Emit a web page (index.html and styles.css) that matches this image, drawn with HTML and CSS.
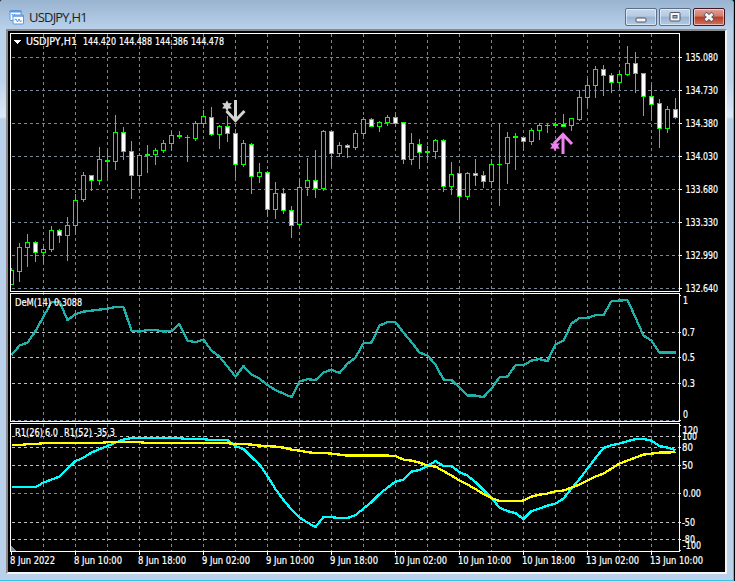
FILE: index.html
```html
<!DOCTYPE html>
<html lang="en">
<head>
    <meta charset="UTF-8">
    <title>USDJPY,H1</title>
    <link rel="stylesheet" href="styles.css">
</head>
<body>
    <div class="window">
        <!-- title bar -->
        <div class="titlebar">
            <svg class="app-icon" width="16" height="16" viewBox="0 0 16 16">
                <rect x="1" y="1.500" width="11" height="10" rx="1" fill="#fff" stroke="#5b95dc"/>
                <path d="M0.500 2.500h12" stroke="#5b95dc" stroke-width="2"/>
                <path d="M2.500 6l1-1 1 2 1.500-2" fill="none" stroke="#5b95dc"/>
                <rect x="4" y="6" width="10.500" height="9" rx="1" fill="#fff" stroke="#5b95dc"/>
                <path d="M3.500 7h11.500" stroke="#5b95dc" stroke-width="1.500"/>
                <path d="M5.500 11l1.500-1 1.500 3 1.500-3 1.500 3 1-1.500" fill="none" stroke="#5b95dc"/>
            </svg>
            <span class="title">USDJPY,H1</span>
            <div class="buttons">
                <div class="btn">
                    <svg width="12" height="12" viewBox="0 0 12 12"><rect x="1" y="7" width="10" height="4" rx="1" fill="#f5f5f5" stroke="#535666"/></svg>
                </div>
                <div class="btn">
                    <svg width="12" height="12" viewBox="0 0 12 12"><rect x="1" y="1.500" width="10" height="8.500" rx="1" fill="#f5f5f5" stroke="#535666"/><rect x="4" y="4.500" width="4" height="2.500" fill="#8fb0d4" stroke="#535666"/></svg>
                </div>
                <div class="btn close">
                    <svg width="12" height="12" viewBox="0 0 12 12"><path d="M2 2.500l8 7M10 2.500l-8 7" stroke="#535666" stroke-width="4.600"/><path d="M2.500 2.900l7 6.200M9.500 2.900l-7 6.200" stroke="#f5f5f5" stroke-width="2.800"/></svg>
                </div>
            </div>
        </div>

        <!-- chart -->
        <div class="client">
            <svg id="chart" class="chart" width="717" height="541" viewBox="8 31 717 541"></svg>
        </div>
    </div>

    <script>
        const chart = document.getElementById('chart');
        const STEP = 8;
        const FIRST = 11;

        // [high, body top, body bottom, low, 1 = bearish]
        const candles = [
            [268,270,284,284,0],[243,247,271,281,0],[234,242,247,266,0],[241,242,252,261,1],
            [246,249,252,263,0],[226,230,249,251,0],[229,230,235,242,1],[217,225,235,260,0],
            [194,200,225,233,0],[172,175,199,201,0],[175,175,180,190,1],[147,159,180,184,0],
            [149,160,161,177,0],[115,132,161,169,0],[127,132,151,159,1],[141,151,175,198,1],
            [153,155,175,185,0],[145,154,155,172,0],[148,150,154,164,0],[140,143,150,152,0],
            [131,135,143,150,0],[131,135,136,138,0],[135,137,137,161,0],[121,123,138,140,0],
            [110,116,123,127,0],[107,117,134,135,1],[125,126,134,148,0],[116,126,133,141,1],
            [129,133,164,177,1],[140,143,164,166,0],[143,144,176,193,1],[163,172,176,182,0],
            [171,172,209,216,1],[182,193,209,218,0],[188,193,210,213,1],[206,210,225,237,1],
            [179,187,224,227,0],[158,180,187,195,0],[150,180,188,197,1],[130,131,188,190,0],
            [130,131,153,165,1],[142,145,153,156,0],[144,145,147,157,1],[130,133,147,149,0],
            [117,119,133,135,0],[118,119,126,126,1],[121,122,126,131,0],[115,117,122,125,0],
            [115,117,123,123,1],[122,122,159,163,1],[133,143,159,164,0],[139,144,152,168,1],
            [146,151,152,159,0],[139,140,151,158,0],[139,140,186,191,1],[162,174,186,194,0],
            [167,173,196,221,1],[172,173,196,199,0],[159,173,175,185,1],[171,175,181,187,1],
            [159,164,181,187,0],[123,164,164,205,0],[132,137,163,183,0],[133,136,137,169,0],
            [136,137,141,150,1],[128,130,141,144,0],[123,125,130,139,0],[123,125,125,132,0],
            [122,124,125,127,0],[114,124,126,126,1],[118,118,125,130,0],[90,97,119,120,0],
            [79,85,97,106,0],[66,69,85,97,0],[65,69,75,95,1],[73,75,82,92,1],
            [71,74,82,87,0],[46,63,74,75,0],[52,63,73,92,1],[73,73,96,115,1],
            [85,96,104,120,1],[99,103,128,147,1],[106,109,128,132,0],[98,109,117,118,1]
        ];

        const dem = [
            355,345.5,342.5,331,316.5,302,301.5,320,314,311.5,310.5,309.5,308.5,307,307,330.5,
            331.5,330,330,331.5,331,324,340.5,342,339.5,350.5,356.5,366.5,376.5,366,374.5,378.5,
            385,390,393.5,397,381.5,379,380,372.5,369.5,373,363.5,357.5,343,342.5,325.5,322,322,
            332.5,342,352.5,355.5,364.5,379.5,380,387.5,395.5,395.5,397,388.5,377,376.5,365,365,
            360.5,359,361,344.5,340.5,323.5,318,318,315,315,301,300.5,300,317.5,335.5,340.5,
            352.5,352.5,352.5
        ];

        const r26 = [
            487,487,487,487,482.5,479.5,476.5,468.5,461,457.5,452.5,449,446,442.5,439.5,438,438,
            438,438,438,438,438,439,439,439,440,440,440,446,449,457,464.5,476,489,500,509.5,
            517.5,522.5,527,517,517,518,518,515,508.5,502,494,487.5,481.5,479.5,471.5,470,466,
            461,466,466,472,475.5,482,490,498,507.5,511,513,519,511,508.5,505.5,503.5,498.5,
            488.5,479,468.5,458,448,445,443.5,441,439,439,440.5,446,447.5,450
        ];

        const r52 = [
            445,445,444,444,443,443,443,443,443,443,443,443,442,442,442,442,442,443,443,443,443,
            443,443,443,443,443,443,443,444,444,444.5,445.5,446,446.5,447.5,449.5,450.5,452,453,
            453,453.5,454.5,455.5,455.5,455.5,455.5,455.5,455.5,456,459.5,460.5,462.5,465.5,466.5,
            471,475.5,480.5,484.5,489,494,498,501,501,501,500.5,496.5,494.5,493.5,491,490.5,487.5,
            484.5,480.5,476.5,473.5,468.5,463.5,460.5,457.5,454.5,453.5,452.5,452.5,452
        ];

        let out = '';

        function line(x1, y1, x2, y2, cls) {
            out += `<line x1="${x1}" y1="${y1}" x2="${x2}" y2="${y2}" class="${cls}"/>`;
        }

        function label(x, y, width, text) {
            out += `<text x="${x}" y="${y}" textLength="${width}" lengthAdjust="spacingAndGlyphs" class="label">${text}</text>`;
        }

        function plot(values, cls) {
            const pts = values.map((y, i) => `${FIRST + i * STEP + 0.5},${y + 0.1}`).join(' ');
            out += `<polyline points="${pts}" class="${cls}"/>`;
        }

        // grid
        for (let x = 43; x < 679; x += 32) {
            line(x + 0.5, 34, x + 0.5, 551, 'grid');
        }
        [57, 90, 123, 156, 189, 222, 255, 288, 420, 493].forEach(y => line(12, y + 0.5, 679, y + 0.5, 'grid'));
        [332, 357, 383, 436, 447, 465, 522, 539].forEach(y => line(12, y + 0.5, 679, y + 0.5, 'level'));

        // candles
        candles.forEach(([high, top, bottom, low, bear], i) => {
            const x = FIRST + i * STEP;
            out += `<rect x="${x}" y="${high}" width="1" height="${low - high + 1}" class="bull"/>`;
            out += `<rect x="${x - 2}" y="${top}" width="5" height="${bottom - top + 1}" class="bull"/>`;
            if (bottom - top > 1) {
                out += `<rect x="${x - 1}" y="${top + 1}" width="3" height="${bottom - top - 1}" class="${bear ? 'bear-fill' : 'bull-fill'}"/>`;
            }
        });

        // indicators
        plot(dem, 'dem');
        plot(r26, 'r26');
        plot(r52, 'r52');

        // left gutter, panel frames
        out += '<rect x="8" y="31" width="2" height="541" fill="#000"/>';
        [[33, 291], [293, 421], [423, 551]].forEach(([a, b]) => {
            out += `<rect x="10.5" y="${a + 0.5}" width="669" height="${b - a}" class="frame"/>`;
        });
        out += '<path d="M11 546l5 5h-5z" fill="#778899"/>';

        // price scale
        ['135.080', '134.730', '134.380', '134.030', '133.680', '133.330', '132.990', '132.640'].forEach((t, i) => {
            const y = 57 + i * 33;
            line(680, y + 0.5, 682, y + 0.5, 'tick');
            label(685.5, y + 4, 32.5, t);
        });

        // indicator scales
        [295, 332, 357, 383, 420, 425, 436, 447, 465, 493, 522, 539, 550].forEach(y => line(680, y + 0.5, 681, y + 0.5, 'tick'));
        label(683, 304, 5, '1');
        label(682, 336, 13, '0.7');
        label(682, 361, 13, '0.5');
        label(682, 387, 13, '0.3');
        label(683, 418, 5, '0');
        label(683, 434, 15, '120');
        label(682, 440, 15, '100');
        label(682, 451, 11, '80');
        label(682, 469, 11, '50');
        label(683, 497, 18, '0.00');
        label(682, 526, 13, '-50');
        label(682, 543, 13, '-80');
        label(683, 549, 18, '-100');

        // time scale
        ['8 Jun 2022', '8 Jun 10:00', '8 Jun 18:00', '9 Jun 02:00', '9 Jun 10:00', '9 Jun 18:00',
         '10 Jun 02:00', '10 Jun 10:00', '10 Jun 18:00', '13 Jun 02:00', '13 Jun 10:00'].forEach((t, i) => {
            const x = 10 + i * 64;
            line(x + 1.5, 552, x + 1.5, 555, 'tick');
            label(x, 564, i === 0 ? 45 : i < 6 ? 48 : 53, t);
        });

        // captions
        out += '<path d="M13.500 40h8l-4 4z" fill="#fff"/>';
        label(26, 45, 51, 'USDJPY,H1');
        ['144.420', '144.488', '144.386', '144.478'].forEach((t, i) => label(83 + i * 36, 45, 33, t));
        label(15, 306, 36, 'DeM(14)');
        label(54, 306, 28, '0.3088');
        label(15, 436, 28, 'R1(26)');
        label(45, 436, 13, '6.0');
        label(64, 436, 28, 'R1(52)');
        label(94, 436, 21, '-35.3');

        // signal arrows
        const star = (x, y) => {
            let pts = '';
            for (let i = 0; i < 12; i++) {
                const r = i % 2 ? 3 : 5.6;
                const a = i * Math.PI / 6;
                pts += `${x + r * Math.sin(a)},${y - r * Math.cos(a)} `;
            }
            return `<polygon points="${pts}"/>`;
        };
        out += `<g class="sell"><path d="M235.500 100v21M226.500 111l9 9.500 9-9.500"/>${star(227, 105.8)}</g>`;
        out += `<g class="buy"><path d="M563 154v-20M554 143.500l9-9 9 9.500"/>${star(555, 146)}</g>`;

        chart.innerHTML = out;
    </script>
</body>
</html>
```
FILE: styles.css
```css
body {
    margin: 0;
    background: #000;
    overflow: hidden;
}

.window {
    box-sizing: border-box;
    width: 734px;
    height: 581px;
    padding: 0 6px 6px;
    border-right: 1px solid #35c5e8;
    border-bottom: 1px solid #35c5e8;
    border-radius: 2px 3px 0 0;
    background: linear-gradient(#99b4d1 0, #b9d1ea 29px, #bdd3ec 80px, #dce8f5 117px, #b9d1ea 119px, #b9d1ea 100%);
}

.titlebar {
    height: 29px;
    display: flex;
    align-items: center;
    padding: 5px 2px 0;
    box-sizing: border-box;
}

.app-icon {
    margin: 0 4px 0 1px;
}

.title {
    flex: 1;
    font: 13px/18px "Open Sans", sans-serif;
    letter-spacing: -0.8px;
    padding-bottom: 1px;
    color: #222;
}

.buttons {
    display: flex;
    gap: 2px;
}

.btn {
    box-sizing: border-box;
    width: 32px;
    height: 18px;
    border: 1px solid #5c6f89;
    border-radius: 2px;
    display: flex;
    align-items: center;
    justify-content: center;
    background: linear-gradient(#c4d6ea 0, #b5cbe3 45%, #98b3d1 50%, #b2cbe6 100%);
    box-shadow: inset 0 0 0 1px rgba(255, 255, 255, 0.5);
}

.close {
    border-color: #431422;
    background: linear-gradient(#e0a197 0, #cf7c6d 45%, #b83a24 50%, #cd7361 100%);
}

.client {
    border-style: solid;
    border-width: 2px;
    border-color: #8a8a8a #f4f4f4 #f4f4f4 #8a8a8a;
    width: 717px;
    height: 541px;
    background: #000;
}

.chart {
    display: block;
    background: #000;
    shape-rendering: crispEdges;
}

.label {
    font: 10px "DejaVu Sans Condensed", "DejaVu Sans", sans-serif;
    fill: #fff;
    stroke: #fff;
    stroke-width: 0.2;
}

.grid,
.level {
    stroke: #778899;
    stroke-width: 1;
    stroke-dasharray: 3 3;
}

.level {
    stroke: #c0c0c0;
}

.tick {
    stroke: #fff;
    stroke-width: 1;
}

.frame {
    fill: none;
    stroke: #fff;
}

.bull {
    fill: #00ff00;
}

.bull-fill {
    fill: #000;
}

.bear-fill {
    fill: #fff;
}

.dem,
.r26,
.r52 {
    fill: none;
    stroke-width: 2.3;
    stroke-linejoin: round;
}

.dem {
    stroke: #20b2aa;
}

.r26 {
    stroke: #00ffff;
}

.r52 {
    stroke: #ffff00;
}

.sell,
.buy {
    shape-rendering: auto;
    stroke-width: 3;
}

.sell path,
.buy path {
    fill: none;
}

.sell {
    stroke: #d3d3d3;
}

.buy {
    stroke: #ee82ee;
}

.sell polygon {
    fill: #d3d3d3;
    stroke: none;
}

.buy polygon {
    fill: #ee82ee;
    stroke: none;
}
```
